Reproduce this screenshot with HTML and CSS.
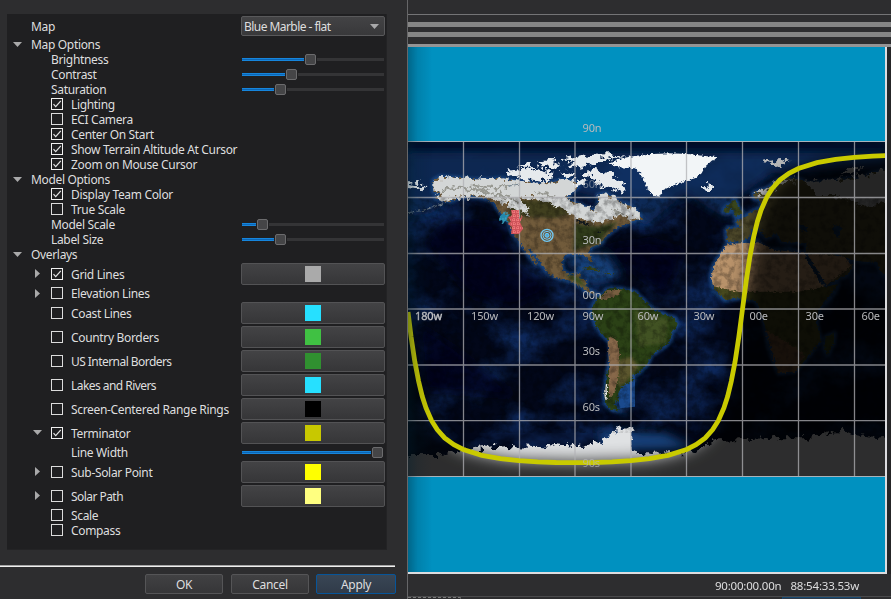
FILE: index.html
```html
<!DOCTYPE html>
<html lang="en">
<head>
<meta charset="utf-8">
<title>Map Display</title>
<link rel="stylesheet" href="styles.css">
</head>
<body>
<svg width="0" height="0" class="defs">
  <symbol id="check" viewBox="0 0 12 12"><rect x=".5" y=".5" width="11" height="11" fill="none" stroke="#f0f0f0"/><path d="M2.5 6.2 4.7 8.6 9.8 2.8" fill="none" stroke="#e4e4e4" stroke-width="1.2"/></symbol>
  <symbol id="box" viewBox="0 0 12 12"><rect x=".5" y=".5" width="11" height="11" fill="none" stroke="#dcdcdc"/></symbol>
  <symbol id="down" viewBox="0 0 9 5"><path d="M0 0H9L4.5 5Z" fill="#a9a9aa"/></symbol>
  <symbol id="right" viewBox="0 0 5 9"><path d="M0 0V9L5 4.5Z" fill="#a9a9aa"/></symbol>
</svg>
<div class="app">
<section class="dialog">
  <div class="tree">
    <div class="row first"><span class="label l1">Map</span><div class="combo"><span>Blue Marble - flat</span><svg width="9" height="5"><use href="#down"/></svg></div></div>
    <div class="row"><svg class="d1" width="9" height="5"><use href="#down"/></svg><span class="label l1">Map Options</span></div>
    <div class="row"><span class="label l2">Brightness</span><div class="slider" style="--v:64px"><i></i><b></b><u></u></div></div>
    <div class="row"><span class="label l2">Contrast</span><div class="slider" style="--v:45px"><i></i><b></b><u></u></div></div>
    <div class="row"><span class="label l2">Saturation</span><div class="slider" style="--v:34px"><i></i><b></b><u></u></div></div>
    <div class="row"><svg class="cb" width="12" height="12"><use href="#check"/></svg><span class="label l3">Lighting</span></div>
    <div class="row"><svg class="cb" width="12" height="12"><use href="#box"/></svg><span class="label l3">ECI Camera</span></div>
    <div class="row"><svg class="cb" width="12" height="12"><use href="#check"/></svg><span class="label l3">Center On Start</span></div>
    <div class="row"><svg class="cb" width="12" height="12"><use href="#check"/></svg><span class="label l3">Show Terrain Altitude At Cursor</span></div>
    <div class="row"><svg class="cb" width="12" height="12"><use href="#check"/></svg><span class="label l3">Zoom on Mouse Cursor</span></div>
    <div class="row"><svg class="d1" width="9" height="5"><use href="#down"/></svg><span class="label l1">Model Options</span></div>
    <div class="row"><svg class="cb" width="12" height="12"><use href="#check"/></svg><span class="label l3">Display Team Color</span></div>
    <div class="row"><svg class="cb" width="12" height="12"><use href="#box"/></svg><span class="label l3">True Scale</span></div>
    <div class="row"><span class="label l2">Model Scale</span><div class="slider" style="--v:16px"><i></i><b></b><u></u></div></div>
    <div class="row"><span class="label l2">Label Size</span><div class="slider" style="--v:34px"><i></i><b></b><u></u></div></div>
    <div class="row"><svg class="d1" width="9" height="5"><use href="#down"/></svg><span class="label l1">Overlays</span></div>
    <div class="row tall"><svg class="r2" width="5" height="9"><use href="#right"/></svg><svg class="cb" width="12" height="12"><use href="#check"/></svg><span class="label l3">Grid Lines</span><div class="swatch gray"></div></div>
    <div class="row"><svg class="r2" width="5" height="9"><use href="#right"/></svg><svg class="cb" width="12" height="12"><use href="#box"/></svg><span class="label l3">Elevation Lines</span></div>
    <div class="row tall"><svg class="cb" width="12" height="12"><use href="#box"/></svg><span class="label l3">Coast Lines</span><div class="swatch cyan"></div></div>
    <div class="row tall"><svg class="cb" width="12" height="12"><use href="#box"/></svg><span class="label l3">Country Borders</span><div class="swatch green"></div></div>
    <div class="row tall"><svg class="cb" width="12" height="12"><use href="#box"/></svg><span class="label l3 tight">US Internal Borders</span><div class="swatch forest"></div></div>
    <div class="row tall"><svg class="cb" width="12" height="12"><use href="#box"/></svg><span class="label l3 tight">Lakes and Rivers</span><div class="swatch cyan"></div></div>
    <div class="row tall"><svg class="cb" width="12" height="12"><use href="#box"/></svg><span class="label l3">Screen-Centered Range Rings</span><div class="swatch black"></div></div>
    <div class="row tall"><svg class="d2" width="9" height="5"><use href="#down"/></svg><svg class="cb" width="12" height="12"><use href="#check"/></svg><span class="label l3">Terminator</span><div class="swatch olive"></div></div>
    <div class="row"><span class="label l3">Line Width</span><div class="slider" style="--v:132px"><i></i><b></b><u></u></div></div>
    <div class="row tall"><svg class="r2" width="5" height="9"><use href="#right"/></svg><svg class="cb" width="12" height="12"><use href="#box"/></svg><span class="label l3">Sub-Solar Point</span><div class="swatch yellow"></div></div>
    <div class="row tall"><svg class="r2" width="5" height="9"><use href="#right"/></svg><svg class="cb" width="12" height="12"><use href="#box"/></svg><span class="label l3 tight">Solar Path</span><div class="swatch pale"></div></div>
    <div class="row"><svg class="cb" width="12" height="12"><use href="#box"/></svg><span class="label l3">Scale</span></div>
    <div class="row"><svg class="cb" width="12" height="12"><use href="#box"/></svg><span class="label l3">Compass</span></div>
  </div>
  <div class="rule"></div>
  <div class="buttons"><button>OK</button><button>Cancel</button><button class="primary">Apply</button></div>
</section>
<main class="view">
  <div class="toolbar"><div class="line"></div><div class="bar"></div><div class="bar two"></div></div>
  <div class="stage">
  <svg class="map" width="477" height="525" viewBox="408 47 477 525">
    <defs>
      <filter id="rough" x="-5%" y="-5%" width="110%" height="110%" color-interpolation-filters="sRGB"><feTurbulence type="fractalNoise" baseFrequency=".13" numOctaves="3" seed="4"/><feDisplacementMap in="SourceGraphic" scale="14" xChannelSelector="R" yChannelSelector="G"/></filter>
      <filter id="ragged" x="-5%" y="-5%" width="110%" height="110%" color-interpolation-filters="sRGB"><feTurbulence type="fractalNoise" baseFrequency=".05" numOctaves="4" seed="8"/><feDisplacementMap in="SourceGraphic" scale="42" xChannelSelector="R" yChannelSelector="G"/></filter>
      <filter id="ocean" x="0" y="0" width="100%" height="100%" color-interpolation-filters="sRGB"><feTurbulence type="fractalNoise" baseFrequency=".018 .026" numOctaves="5" seed="11"/><feColorMatrix values="0 0 0 0 .07  0 0 0 0 .2  0 0 0 0 .44  2.6 0 0 0 -1.1"/></filter>
      <filter id="grain" x="0" y="0" width="100%" height="100%" color-interpolation-filters="sRGB"><feTurbulence type="fractalNoise" baseFrequency=".15" numOctaves="4" seed="3"/><feColorMatrix values="0 0 0 0 0  0 0 0 0 0  0 0 0 0 0  3 0 0 0 -1.2"/></filter>
      <filter id="b3" x="-20%" y="-20%" width="140%" height="140%"><feGaussianBlur stdDeviation="14"/></filter>
      <filter id="b1" x="-20%" y="-20%" width="140%" height="140%"><feGaussianBlur stdDeviation="4"/></filter>
      <filter id="bn" x="-20%" y="-20%" width="140%" height="140%" color-interpolation-filters="sRGB"><feGaussianBlur stdDeviation="8"/></filter>
      <linearGradient id="edge"><stop stop-color="#002030" stop-opacity=".38"/><stop offset=".4" stop-color="#002030" stop-opacity=".14"/><stop offset="1" stop-color="#002030" stop-opacity="0"/></linearGradient>
      <clipPath id="world"><rect x="408" y="142" width="477" height="334.5"/></clipPath>
      <path id="na" d="M85 212 105 200 150 203 200 208 250 210 290 205 320 212 370 215 400 222 450 215 480 210 510 215 520 230 500 245 485 262 500 275 530 285 555 300 570 302 580 275 578 255 600 250 630 265 650 278 680 290 690 300 715 328 690 330 670 340 640 350 620 365 600 380 590 400 560 410 550 428 563 455 556 460 545 440 530 432 500 432 480 435 470 455 475 480 490 495 510 492 528 488 522 505 542 512 545 530 560 545 575 550 560 552 535 538 510 518 470 508 430 492 415 470 395 440 375 415 368 420 385 440 400 465 388 460 370 435 350 405 335 385 322 370 315 345 300 325 280 300 270 280 240 265 200 258 165 262 130 275 90 262 110 250 85 245Z"/>
      <path id="sa" d="M565 585 580 560 610 535 640 535 690 545 720 575 740 595 770 610 810 625 818 645 800 670 795 695 770 715 740 735 725 765 700 790 680 795 685 810 650 830 640 850 640 870 625 882 645 902 620 900 600 880 598 850 605 800 615 750 618 700 600 682 575 650 560 615Z"/>
      <path id="af" d="M965 400 1030 395 1060 395 1075 412 1110 420 1150 415 1200 430 1225 470 1260 530 1300 522 1290 550 1240 600 1235 640 1248 690 1210 740 1170 785 1120 790 1090 710 1080 650 1065 595 1050 572 1000 565 960 570 925 540 918 500 925 465 950 430Z"/>
      <path id="eu" d="M1010 352 990 335 1020 320 1050 300 1070 290 1060 265 1045 265 1045 250 1085 235 1120 212 1150 203 1190 210 1210 220 1260 215 1290 212 1330 205 1370 208 1400 190 1450 180V500L1430 490 1415 455 1370 455 1340 450 1320 440 1285 430 1315 455 1345 468 1325 495 1265 525 1250 500 1220 455 1205 425 1205 400 1130 395 1115 370 1085 385 1060 355 1035 360 1040 372 1010 395 965 392 965 355Z"/>
      <path id="isles" d="M965 290 990 268 1000 290 1015 310 990 320 985 300ZM958 295 975 293 972 308 955 308ZM530 475 560 469 590 485 565 482ZM597 488 630 490 615 495ZM1262 680 1290 668 1285 705 1268 735 1258 715Z"/>
      <path id="ice" d="M608 160 650 145 720 133 790 130 850 132 900 138 940 142 920 152 900 170 890 190 870 205 835 215 800 228 775 240 765 260 745 258 730 240 718 215 705 190 690 175 640 172Z"/>
      <path id="arctic" d="M882 228 900 225 930 230 920 240 890 238ZM315 182 350 176 400 180 440 188 450 200 420 212 360 208 320 195ZM330 168 380 162 400 170 370 174ZM400 155 440 150 470 165 440 175 410 168ZM470 150 500 142 560 135 610 133 660 137 640 145 590 150 560 165 510 175 490 165 510 158ZM460 185 490 182 510 195 480 205ZM530 185 570 180 610 190 660 218 665 245 640 240 605 232 570 220 575 205 535 200ZM505 215 530 210 540 225 515 232ZM0 215 40 220 65 230 45 235 0 230Z"/>
      <path id="antarctica" d="M0 1035 100 1035 180 1020 300 1008 420 1012 450 1000 540 1008 590 995 630 960 690 950 678 990 680 1020 730 1032 780 1030 860 1030 930 995 1000 988 1080 985 1200 985 1260 970 1320 965 1380 978 1460 985V1135H-20V1035Z"/>
    </defs>
    <rect x="408" y="47" width="477" height="525" fill="#0091c0"/>
    <g clip-path="url(#world)">
      <rect x="408" y="141" width="478" height="336" fill="#020719"/>
      <rect x="408" y="141" width="478" height="336" filter="url(#ocean)" opacity=".75"/>
      <g transform="translate(405 110) scale(.33333)">
        <g filter="url(#b3)">
          <path d="M0 130 300 120 700 110 1445 110V180L1100 190 1000 260 970 330 840 250 720 350 640 280 420 220 200 220 80 310 0 320Z" fill="#0e3163" opacity=".75"/>
          <path d="M0 80H1445V130H0Z" fill="#030b26"/>
          <path d="M740 650 680 830 660 920 640 890ZM580 960 780 970 880 1020 600 1020ZM470 440 600 430 650 500 560 520Z" fill="#143f78"/>
          <path d="M130 330 290 345 330 460 440 540 320 590 200 560 60 400ZM600 410 740 390 840 420 780 560 680 480ZM40 640 160 720 340 860 60 840Z" fill="#02061a" opacity=".75"/>
        </g>
        <g fill="#143d75" stroke="#174480" stroke-width="13" stroke-linejoin="round" filter="url(#b1)">
          <use href="#na"/><use href="#sa"/><use href="#af"/><use href="#eu"/><use href="#isles"/>
        </g>
        <path d="M640 770 735 740 690 800 690 890 645 895 635 850Z" fill="#1a4a8e"/>
        <g filter="url(#rough)">
          <use href="#na" fill="#715b3b"/><use href="#eu" fill="#4e492b"/><use href="#isles" fill="#39451c"/>
          <use href="#sa" fill="#2b4116"/>
          <path d="M918 500 930 460 965 402 1060 397 1110 420 1200 430 1260 530 1180 550 1000 550 925 532Z" fill="#b8926a"/>
          <path d="M922 528 1000 545 1180 545 1260 530 1300 522 1240 600 1235 640 1248 690 1210 740 1170 785 1120 790 1065 595 1050 572 1000 565 960 570Z" fill="#47491f"/>
          <path d="M1082 660 1150 700 1200 735 1170 785 1120 790Z" fill="#755336"/>
          <path d="M1205 430 1320 440 1340 468 1265 525Z" fill="#a27e5a"/>
          <path d="M612 678 636 690 645 740 640 800 628 850 612 870 612 760 608 700Z" fill="#87684a"/>
          <path d="M580 565 610 540 650 540 640 555 600 570Z" fill="#785f41"/>
          <path d="M600 855 605 820 603 870Z" stroke="#eee" stroke-width="4"/>
        </g>
        <g filter="url(#b1)">
          <path d="M510 340 580 350 640 335 600 375 585 400 540 410 505 425Z" fill="#293817" opacity=".9"/>
          <path d="M320 270 440 270 500 310 450 325 350 320 330 365 310 330Z" fill="#34381d" opacity=".8"/>
          <path d="M480 495 520 500 545 535 510 515Z" fill="#344b1d"/>
          <path d="M690 600 790 630 780 700 700 710Z" fill="#4b5a26" opacity=".7"/>
          <path d="M640 750 680 740 700 770 660 820 640 830Z" fill="#695d35" opacity=".8"/>
        </g>
        <g filter="url(#ragged)">
          <path d="M85 212 105 200 150 203 250 210 290 205 370 215 400 222 450 215 480 210 510 215 520 230 500 245 485 262 500 275 530 285 555 300 570 302 580 275 578 255 600 250 650 278 690 300 715 328 690 328 640 315 600 332 550 335 520 325 480 300 430 275 380 262 345 262 375 315 340 300 300 280 250 262 200 256 165 260 130 270 90 262 110 250 85 245Z" fill="#d3d6d6"/>
          <use href="#arctic" fill="#e6eaed"/>
          <path d="M1075 155 1120 150 1160 155 1110 168ZM1042 250 1085 235 1120 212 1170 208 1100 235 1065 265ZM1200 215 1330 205 1450 182V275L1380 290 1290 255 1240 255ZM1310 195 1330 178 1390 170 1340 190Z" fill="#b8b9ba"/>
          <use href="#antarctica" fill="#dfe1e3"/>
          <path d="M110 245 150 232 230 240 290 255 340 280M200 225 300 235M400 250 450 262M620 300 660 310" fill="none" stroke="#77766b" stroke-width="7" opacity=".65"/>
        </g>
        <g filter="url(#rough)">
          <use href="#ice" fill="#f2f5f7"/>
          <path d="M1180 340 1210 352 1205 365 1180 358ZM1285 345 1310 350 1300 385 1285 365ZM1200 440 1210 440 1260 520 1250 525Z" fill="#123763"/>
          <path d="M510 327 535 335 552 342 548 348 520 337ZM575 365 600 360 580 370Z" fill="#131a20"/>
          <path d="M10 308 60 300 130 275M310 228 345 222" fill="none" stroke="#72818c" stroke-width="3"/>
        </g>
      </g>
      <rect x="408" y="197" width="477" height="236" filter="url(#grain)" opacity=".28"/>
      <path filter="url(#bn)" fill="#000" opacity=".8" d="M950 155H885.9L854.2 157.3 835.6 159.3 817 162.7 798.4 168.5 789 173.3 779.7 180.1 772.3 188.4 766.7 197.3 761.1 210 757.4 221.5 753.7 236.8 749.9 256.5 746.2 281 742.5 309 738.8 337 735.1 361.5 731.3 381.2 727.6 396.5 723.9 408 718.3 420.7 712.7 429.6 705.3 437.9 696 444.7 686.6 449.5 668 455.3 649.4 458.7 630.8 459.7 575 461 519.1 459.7 500.5 457.7 481.9 454.3 463.3 449.5 453.9 444.7 444.6 437.9 437.2 429.6 431.6 420.7 426 408 422.3 396.5 418.6 381.2 414.8 361.5 411.1 337 407.4 309H340V550H950Z"/>
      <path d="M463.5 142V477M519.5 142V477M575 142V477M631 142V477M686.5 142V477M742.5 142V477M798.5 142V477M854.5 142V477M408 197.5H886M408 253.5H886M408 309H886M408 365H886M408 420.7H886" stroke="#b0b0b4" stroke-opacity=".75" stroke-width="1.3"/>
    </g>
    <path d="M408 141.5H886M408 476.5H886" stroke="#a9b3bb"/>
    <path d="M500 216 506 211 505 215 510 214 506 220 510 223 505 221 503 224 502 220 499 221Z" fill="#2488ab"/>
    <path d="M503 213H509M499 219H508M502 224 508 214" stroke="#47a6c2" stroke-dasharray="2 1"/>
    <path d="M511 210H519V219L523 216 520 222 523 229 519 234H511L512 227 508 224 511 221 508 217 512 216Z" fill="#cf545a"/>
    <path d="M512 212H519M511 216H522M510 220H521M511 224H521M510 228H523M513 232H520M514 210V234M518 210V234" stroke="#ff8c8c" stroke-dasharray="1 1"/>
    <g fill="none" stroke="#70c8f4"><circle cx="547" cy="235.3" r="6" stroke-width="1.3"/><circle cx="547" cy="235.3" r="4"/><circle cx="547" cy="235.3" r="2" fill="#4fa8d5"/></g>
    <polyline fill="none" stroke="#c9ca00" stroke-width="4.8" points="892,155.4 885.9,155.6 872.8,156.1 854.2,157.3 835.6,159.3 817,162.7 798.4,168.5 789,173.3 779.7,180.1 772.3,188.4 766.7,197.3 761.1,210 757.4,221.5 753.7,236.8 749.9,256.5 746.2,281 742.5,309 738.8,337 735.1,361.5 731.3,381.2 727.6,396.5 723.9,408 718.3,420.7 712.7,429.6 705.3,437.9 696,444.7 686.6,449.5 668,455.3 649.4,458.7 630.8,460.7 612.2,461.9 594,462.5 575,462.7 556,462.5 537.7,461.9 519.1,460.7 500.5,458.7 481.9,455.3 463.3,449.5 453.9,444.7 444.6,437.9 437.2,429.6 431.6,420.7 426,408 422.3,396.5 418.6,381.2 414.8,361.5 411.1,337 408,312"/>
    <g class="geo">
      <text x="582.5" y="132">90n</text><text x="582.5" y="188" opacity=".55">60n</text><text x="582.5" y="244">30n</text><text x="582.5" y="299">00n</text><text x="582.5" y="355">30s</text><text x="582.5" y="411">60s</text><text x="582.5" y="467" opacity=".7">90s</text>
      <text x="415" y="320" class="strong">180w</text><text x="471" y="320">150w</text><text x="527" y="320">120w</text><text x="582.5" y="320">90w</text><text x="637.5" y="320">60w</text><text x="693.5" y="320">30w</text><text x="749.5" y="320">00e</text><text x="805.5" y="320">30e</text><text x="861.5" y="320">60e</text>
    </g>
    <rect x="408" y="47" width="24" height="526" fill="url(#edge)"/>
  </svg>
  <div class="gutter"></div>
  </div>
  <footer><span>90:00:00.00n</span><span>88:54:33.53w</span></footer>
  <div class="behind"><i></i><b></b></div>
</main>
</div>
</body>
</html>
```
FILE: styles.css
```css
* { box-sizing: border-box; }
body { margin: 0; background: #2d2d2f; color: #dededf; font: 12px/15px "Noto Sans", sans-serif; overflow: hidden; }
svg { display: block; flex: none; }
.defs { position: absolute; }
.app { display: flex; width: 891px; height: 599px; }
.dialog { width: 408px; height: 599px; border-right: 1px solid #666668; padding: 14px 0 0; display: flex; flex-direction: column; flex: none; }
.tree { width: 380px; height: 536px; margin-left: 7px; background: #1f1f21; padding-top: 1px; flex: none; border: 1px solid #232325; border-width: 0 1px 1px 0; }
.row { height: 15px; display: grid; grid-template-columns: 24px 20px 20px 170px 144px; align-items: center; }
.row.first { height: 22px; }
.row.tall { height: 24px; }
.row > * { grid-row: 1; }
.label { white-space: nowrap; letter-spacing: -.33px; }
.tight { letter-spacing: -.55px; }
.l1 { grid-column: 2 / 5; }
.l2 { grid-column: 3 / 5; }
.l3 { grid-column: 4; }
.d1 { grid-column: 1; margin: -1px 0 0 6px; }
.d2 { grid-column: 2; margin: -1px 0 0 2px; }
.r2 { grid-column: 2; margin: -1px 0 0 4px; }
.cb { grid-column: 3; margin-top: -1px; }
.combo, .slider, .swatch { grid-column: 5; }
.combo { width: 144px; height: 20px; border: 1px solid #59595b; border-radius: 2px; background: linear-gradient(#434345, #38383a); display: flex; align-items: center; justify-content: space-between; padding: 1px 5px 0 2px; letter-spacing: -.55px; margin-left: -4px; }
.combo, .swatch { margin-left: 0; }
.slider { display: flex; align-items: center; width: 142px; height: 11px; margin-left: 1px; }
.slider i { width: calc(var(--v) - 2px); height: 3px; background: #0c66b5; border: solid #1685dc; border-width: 1px 0; }
.slider b { width: 11px; height: 11px; margin: 0 1px; background: #454547; border: 1px solid #6b6b6d; border-radius: 2px; flex: none; }
.slider u { flex: 1; height: 3px; background: #343436; }
.swatch { width: 144px; height: 22px; border: 1px solid #535355; border-radius: 2px; background: linear-gradient(#434345, #363638); display: flex; align-items: center; justify-content: center; }
.swatch::before { content: ""; width: 16px; height: 16px; background: var(--c); }
.gray { --c: #aaaaaa; } .cyan { --c: #26e0ff; } .green { --c: #40c143; } .forest { --c: #309030; }
.black { --c: #000; } .olive { --c: #c8c800; } .yellow { --c: #ff0; } .pale { --c: #ffff80; }
.rule { width: 395px; height: 2px; margin-top: 15px; border-top: 1px solid #a5a5a6; background: #efefef; flex: none; }
.buttons { display: flex; justify-content: flex-end; gap: 8px; padding: 7px 11px 0 0; }
.buttons button { width: 78px; height: 20px; padding: 1px 0 0; border: 1px solid #555557; border-radius: 2px; background: linear-gradient(#414143, #363638); color: inherit; font: inherit; line-height: 16px; letter-spacing: -.33px; }
.buttons .primary { width: 80px; margin-left: -1px; border: 1px solid #07559a; background: linear-gradient(#394655, #303b49); }
.view { width: 483px; height: 599px; display: flex; flex-direction: column; }
.toolbar { height: 44px; padding-top: 14px; flex: none; }
.line { height: 1px; background: #747476; }
.bar { height: 5px; margin-top: 7px; background: #858585; }
.bar.two { margin-top: 5px; }
.stage { height: 530px; border-top: 3px solid #949495; display: flex; flex: none; }
.map { border: solid #dcdcdf; border-width: 0 2px 2px 0; box-sizing: content-box; }
.gutter { width: 4px; background: #252527; margin-left: auto; }
.geo { font: 11px "Noto Sans", sans-serif; fill: #b9babc; letter-spacing: -.15px; }
.strong { fill: #c5c5c7; stroke: #c5c5c7; stroke-width: .35px; }
footer { height: 22px; display: flex; justify-content: flex-end; gap: 9px; padding: 4px 32px 0 0; font-size: 11.5px; letter-spacing: -.2px; }
.behind { height: 3px; border-top: 1px solid #4a4a4c; display: flex; justify-content: space-between; padding: 0 30px 0 0; }
.behind i { width: 53px; border-top: 1px dashed #777; border-right: 1px solid #555; }
.behind b { width: 79px; border: 1px solid #17486f; border-bottom: 0; background: #303b49; }
```
